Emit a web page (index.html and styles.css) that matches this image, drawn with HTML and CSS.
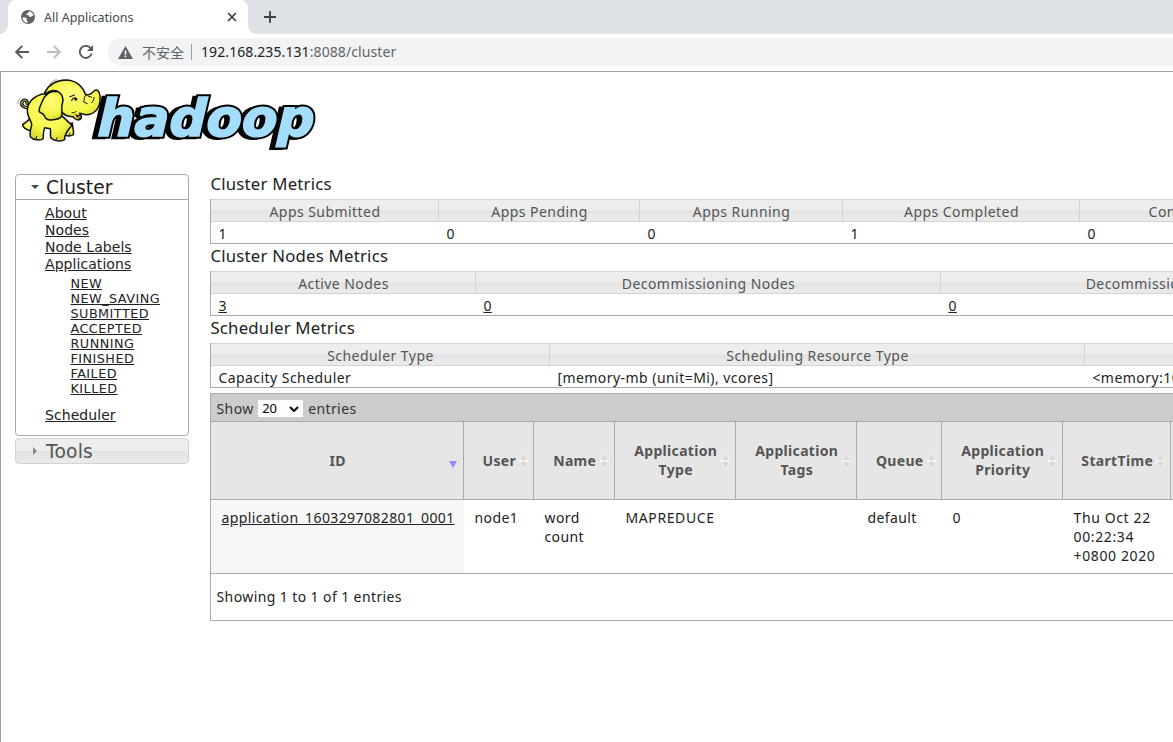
FILE: index.html
```html
<!DOCTYPE html>
<html lang="en">
<head>
<meta charset="utf-8">
<title>All Applications</title>
<link rel="stylesheet" href="styles.css">
</head>
<body>
<header class="browser">
  <div class="tabstrip">
    <div class="tab">
      <svg class="globe" viewBox="0 0 16 16" width="16" height="16"><circle cx="8" cy="8" r="7" fill="#5f6368"/><path d="M2.3 8.4l3.2.2 1.4 1.2-.2 1.6 1 .8v1.6A5.6 5.6 0 0 1 2.3 8.4zM9 2.3l-.4 1.5-2 .6-.2 1.6 2.2.3.7 1.5 1.7.3 1.1-1.3h1.4A5.7 5.7 0 0 0 9 2.3z" fill="#fff"/></svg>
      <span class="tab-title">All Applications</span>
      <svg class="tab-close" viewBox="0 0 10 10" width="10" height="10"><path d="M1 1l8 8M9 1L1 9" stroke="#3c4043" stroke-width="1.7"/></svg>
    </div>
    <svg class="newtab" viewBox="0 0 12 12" width="12" height="12"><path d="M6 0v12M0 6h12" stroke="#3c4043" stroke-width="1.8"/></svg>
  </div>
  <div class="toolbar">
    <svg viewBox="0 0 14 14" width="14" height="14"><path d="M14 7H1.5M7.3.8L1.2 7l6.1 6.2" fill="none" stroke="#55595e" stroke-width="1.9"/></svg>
    <svg viewBox="0 0 14 14" width="14" height="14"><path d="M0 7h12.5M6.7.8L12.8 7l-6.1 6.2" fill="none" stroke="#b9bbbe" stroke-width="1.9"/></svg>
    <svg viewBox="0 0 14 14" width="14" height="14"><path d="M12.6 8.6A6 6 0 1 1 11.4 3" fill="none" stroke="#55595e" stroke-width="1.9"/><path d="M14 0v6H8z" fill="#55595e"/></svg>
    <div class="omnibox">
      <svg viewBox="0 0 15 13" width="15" height="13"><path d="M7.5 0L15 13H0z" fill="#5f6368"/><path d="M7.5 4.5v4M7.5 9.6v1.6" stroke="#fff" stroke-width="1.6"/></svg>
      <span class="insecure">不安全</span>
      <span class="url"><b>192.168.235.131</b>:8088/cluster</span>
    </div>
  </div>
</header>
<main class="page">
  <svg class="logo" viewBox="0 0 930 240" width="310" height="80">
    <defs>
      <radialGradient id="skin" cx=".5" cy=".35" r=".75"><stop offset="0" stop-color="#ffff80"/><stop offset=".6" stop-color="#f6f64a"/><stop offset="1" stop-color="#cccc22"/></radialGradient>
    </defs>
    <g class="wordmark" transform="translate(258 187) skewX(-2)">
      <text class="wm-shadow" x="-9" y="2" textLength="650" lengthAdjust="spacingAndGlyphs">hadoop</text>
      <text class="wm-outline" x="4" y="0" textLength="650" lengthAdjust="spacingAndGlyphs">hadoop</text>
      <text class="wm-face" x="4" y="0" textLength="650" lengthAdjust="spacingAndGlyphs">hadoop</text>
    </g>
    <g transform="translate(12 6)" stroke="#111" stroke-width="4.5" fill="url(#skin)" stroke-linejoin="round" stroke-linecap="round">
      <path d="M46 94C30 97 20 88 24 78c5-9 17-6 15 4" fill="none" stroke-width="10"/>
      <path d="M46 94C30 97 20 88 24 78c5-9 17-6 15 4" fill="none" stroke="#eaea3b" stroke-width="3"/>
      <path d="M142 150c2 8 6 18 9 26 8 5 20 4 27 0 3-10-3-22-3-35z"/>
      <path d="M46 130c-7 6-14 12-20 15 0 9 9 16 25 20l16-18z"/>
      <path d="M93 53C65 56 43 74 40 99c-2 20 10 32 13 46-1 12-8 22-4 37 9 11 31 12 38 7 2-10-1-18 5-34l17 3c3 9-2 15 1 26 9 12 31 14 42 7-2-15 10-29 22-43l-32-30z"/>
      <path d="M92 50c11-22 30-37 63-38 31 0 52 20 60 45 14 1 20-5 26-13 13-8 20 12 17 31-3 27-21 41-41 41-7 0-14-2-20-4l5 14c-6 9-18 7-25-4-19 0-31-8-39-20z"/>
      <path d="M183 113c6 5 14 5 19 1l3 9c-4 9-17 6-22-10z" fill="#171717" stroke="none"/>
      <path d="M190 123c3-3 7-4 11-1-3 5-7 5-11 1z" fill="#dc8072" stroke="none"/>
      <path d="M128 45c-20-3-37 13-44 33-5 12-11 21-8 29 4 6 12 4 15 12 4 12 12 15 26 12 12-1 24-2 26-12 3-14-3-27 3-40 3-15-4-29-18-34z"/>
      <path d="M126 46c-13-3-23 2-30 9" fill="none" stroke-width="7"/>
      <path d="M217 54c-4 7-7 11-7 20M222 60l11 4M208 77l12 6M240 64c0 7-3 12-7 16" fill="none" stroke-width="3"/>
      <path d="M168 62c6-2 10-3 13-5M173 74c2-8 12-12 16-3" fill="none" stroke-width="3.5"/>
      <path d="M181 66c5-2 8 2 8 7l-7 1z" fill="#111" stroke="none"/>
      <path d="M174 110c6 2 10-1 12-4M66 188l2-7M126 192l3-7M165 178l2-7" fill="none" stroke-width="3"/>
      <path d="M108 24c5-7 10-11 19-13M113 29l10-8M12 84c-2-8 0-13 6-16M18 84l2-9" fill="none" stroke="#555" stroke-width="1.8"/>
    </g>
  </svg>
  <div class="columns">
    <nav class="side">
      <section class="panel">
        <h3 class="panel-head open"><i class="arrow down"></i>Cluster</h3>
        <ul class="links">
          <li><a>About</a></li><li><a>Nodes</a></li><li><a>Node Labels</a></li><li><a>Applications</a>
            <ul class="states"><li><a>NEW</a></li><li><a>NEW_SAVING</a></li><li><a>SUBMITTED</a></li><li><a>ACCEPTED</a></li><li><a>RUNNING</a></li><li><a>FINISHED</a></li><li><a>FAILED</a></li><li><a>KILLED</a></li></ul>
          </li>
          <li><a>Scheduler</a></li>
        </ul>
      </section>
      <h3 class="panel-head closed"><i class="arrow right"></i>Tools</h3>
    </nav>
    <div class="content">
      <h2>Cluster Metrics</h2>
      <div class="metrics m-apps">
        <div class="th">Apps Submitted</div><div class="th">Apps Pending</div><div class="th">Apps Running</div><div class="th">Apps Completed</div><div class="th">Containers Running</div>
        <div class="td">1</div><div class="td">0</div><div class="td">0</div><div class="td">1</div><div class="td">0</div>
      </div>
      <h2>Cluster Nodes Metrics</h2>
      <div class="metrics m-nodes">
        <div class="th">Active Nodes</div><div class="th">Decommissioning Nodes</div><div class="th">Decommissioned Nodes</div>
        <div class="td"><a>3</a></div><div class="td"><a>0</a></div><div class="td"><a>0</a></div>
      </div>
      <h2>Scheduler Metrics</h2>
      <div class="metrics m-sched">
        <div class="th">Scheduler Type</div><div class="th">Scheduling Resource Type</div><div class="th"></div>
        <div class="td">Capacity Scheduler</div><div class="td">[memory-mb (unit=Mi), vcores]</div><div class="td">&lt;memory:1024, vCores:1&gt;</div>
      </div>
      <div class="apps">
        <div class="length">Show <span class="select">20<svg viewBox="0 0 10 6" width="10" height="6"><path d="M1 1l4 4 4-4" fill="none" stroke="#000" stroke-width="2"/></svg></span> entries</div>
        <div class="grid head">
          <div class="sorted">ID<i class="sort-desc"></i></div>
          <div>User<svg class="sort" viewBox="0 0 9 18"><path d="M.5 8.5l4-8 4 8zM.5 9.5l4 8 4-8z"/></svg></div>
          <div>Name<svg class="sort" viewBox="0 0 9 18"><path d="M.5 8.5l4-8 4 8zM.5 9.5l4 8 4-8z"/></svg></div>
          <div>Application<br>Type<svg class="sort" viewBox="0 0 9 18"><path d="M.5 8.5l4-8 4 8zM.5 9.5l4 8 4-8z"/></svg></div>
          <div>Application<br>Tags<svg class="sort" viewBox="0 0 9 18"><path d="M.5 8.5l4-8 4 8zM.5 9.5l4 8 4-8z"/></svg></div>
          <div>Queue<svg class="sort" viewBox="0 0 9 18"><path d="M.5 8.5l4-8 4 8zM.5 9.5l4 8 4-8z"/></svg></div>
          <div>Application<br>Priority<svg class="sort" viewBox="0 0 9 18"><path d="M.5 8.5l4-8 4 8zM.5 9.5l4 8 4-8z"/></svg></div>
          <div>StartTime<svg class="sort" viewBox="0 0 9 18"><path d="M.5 8.5l4-8 4 8zM.5 9.5l4 8 4-8z"/></svg></div>
          <div></div>
        </div>
        <div class="grid row">
          <div class="appid"><a>application_1603297082801_0001</a></div><div>node1</div><div>word<br>count</div><div class="type">MAPREDUCE</div><div></div><div>default</div><div>0</div><div class="time">Thu Oct 22<br>00:22:34<br>+0800 2020</div><div></div>
        </div>
        <div class="info">Showing 1 to 1 of 1 entries</div>
      </div>
    </div>
  </div>
</main>
</body>
</html>
```
FILE: styles.css
```css
* { box-sizing: border-box; }
body { margin: 0; width: 1173px; height: 742px; overflow: hidden; background: #fff; color: #222; font: 14px/19px "Noto Sans", "Open Sans", sans-serif; }
h2, h3, ul { margin: 0; padding: 0; font-weight: normal; list-style: none; }
svg { display: block; flex: none; }

/* browser frame */
.browser { height: 71px; }
.tabstrip { height: 34px; background: #dee1e6; padding-left: 8px; display: flex; align-items: center; }
.tab { position: relative; width: 240px; height: 34px; background: #fff; border-radius: 8px 8px 0 0; display: flex; align-items: center; padding: 0 11px 0 12px; }
.tab::before, .tab::after { content: ""; position: absolute; bottom: 0; width: 8px; height: 8px; }
.tab::before { left: -8px; background: radial-gradient(circle at 0 0, #dee1e6 7.5px, #fff 8px); }
.tab::after { right: -8px; background: radial-gradient(circle at 100% 0, #dee1e6 7.5px, #fff 8px); }
.tab-title { margin-left: 8px; flex: 1; font-size: 12.5px; color: #45494d; }
.newtab { margin-left: 16px; }
.toolbar { height: 36px; display: flex; align-items: center; gap: 18px; padding-left: 15px; }
.omnibox { flex: 1; height: 28px; margin-left: -3px; padding-left: 10px; background: #f1f3f4; border-radius: 14px 0 0 14px; display: flex; align-items: center; }
.insecure { margin-left: 9px; width: 50px; border-right: 1px solid #9aa0a6; color: #5f6368; font: 14px/16px "Noto Sans CJK SC", sans-serif; }
.url { margin-left: 9px; padding-bottom: 2px; color: #5f6368; letter-spacing: .09px; }
.url b { font-weight: normal; color: #202124; }

/* page */
.page { height: 671px; border-top: 1px solid #a0a0a0; border-left: 1px solid #a0a0a0; }
.logo { margin: 2px 0 0 9px; overflow: visible; }
.wordmark { font: italic bold 154px "DejaVu Sans", sans-serif; stroke-linejoin: miter; stroke-miterlimit: 2; }
.wm-shadow { fill: #000; stroke: #000; stroke-width: 14px; }
.wm-outline { fill: #000; stroke: #000; stroke-width: 17px; }
.wm-face { fill: #a3ddfb; stroke: #a3ddfb; stroke-width: 5px; }
.columns { display: flex; padding: 18px 0 0 14px; }
.side { width: 174px; padding-top: 2px; font-family: "DejaVu Sans", sans-serif; flex: none; }
.panel { height: 262px; border: 1px solid #aaa; border-radius: 4px; }
.panel-head { display: flex; align-items: center; height: 25px; font-size: 18.7px; padding-left: 15px; }
.open { border-bottom: 1px solid #aaa; color: #212121; }
.closed { height: 26px; margin-top: 2px; padding-left: 15px; border: 1px solid #d3d3d3; border-radius: 4px; color: #555; background: linear-gradient(#ededed 50%, #e4e4e4 52%, #ebebeb); letter-spacing: .2px; }
.arrow { flex: none; border: 4px solid transparent; }
.down { border-top-color: #454545; margin: 4px 7px 0 0; }
.right { border-left-color: #888; margin-right: 7px; margin-left: 2px; border-right-width: 2px; }
.links { padding: 5px 0 0 29px; font-size: 14px; line-height: 17px; letter-spacing: .06px; }
.states { padding: 3px 0 11px 25.5px; font-size: 12.8px; line-height: 15px; letter-spacing: .45px; }
a { text-decoration: underline; color: #222; }
.content { flex: 1; min-width: 0; margin-left: 21px; overflow: hidden; }
h2 { height: 27px; padding-left: .4px; font-size: 16.8px; line-height: 23px; letter-spacing: .21px; }
.metrics { display: grid; grid-template-rows: 23px 22px; border-left: 1px solid #aaa; white-space: nowrap; letter-spacing: .45px; }
.m-apps { grid-template-columns: 228px 201px 203px 237px 276px; }
.m-nodes { grid-template-columns: 265px 465px 458px; }
.m-sched { grid-template-columns: 339px 535px 450px; }
.th { border: solid #d3d3d3; border-width: 1px 1px 1px 0; padding-left: 1px; text-align: center; line-height: 24px; color: #555; background: linear-gradient(#ededed 45%, #e4e4e4 55%, #ebebeb); }
.td { border-bottom: 1px solid #aaa; padding-left: 7.4px; line-height: 24px; }

/* applications table */
.apps { margin-top: 5px; width: 1400px; border: 1px solid #aaa; letter-spacing: .4px; }
.length { height: 28px; display: flex; align-items: center; padding: 2px 0 0 5.5px; background: #ccc; color: #333; border-bottom: 1px solid #aaa; }
.select { display: flex; align-items: center; justify-content: space-between; width: 45px; height: 17px; margin: 0 5px 0 4.5px; padding: 0 4px; background: #fff; color: #000; font-size: 13px; letter-spacing: 0; }
.grid { display: grid; grid-template-columns: 253px 70px 81px 121px 121px 85px 121px 108px 200px; border-bottom: 1px solid #aaa; }
.head { height: 78px; background: #e6e6e6; color: #555; font-weight: bold; text-align: center; letter-spacing: .33px; }
.head > div { position: relative; display: flex; flex-direction: column; justify-content: center; padding: 0 0 1px 1.5px; border-right: 1px solid #aaa; }
.sort { position: absolute; right: 5px; top: 30px; width: 9px; height: 18px; fill: #d9d9d9; stroke: #fafafa; stroke-dasharray: 1.5 .7; stroke-width: 1px; }
.sort-desc { position: absolute; right: 6px; top: 39px; border: 4px solid transparent; border-top: 7px solid #8d8dff; border-bottom: 0; }
.row { height: 74px; }
.row > div { padding: 8px 0 0 10.5px; white-space: nowrap; }
.row > .appid { background: #f7f7f7; padding-left: 10.4px; }
.row > .type { letter-spacing: .6px; }
.row > .time { letter-spacing: .62px; }
.info { height: 46px; padding: 13px 0 0 5.5px; }
```
